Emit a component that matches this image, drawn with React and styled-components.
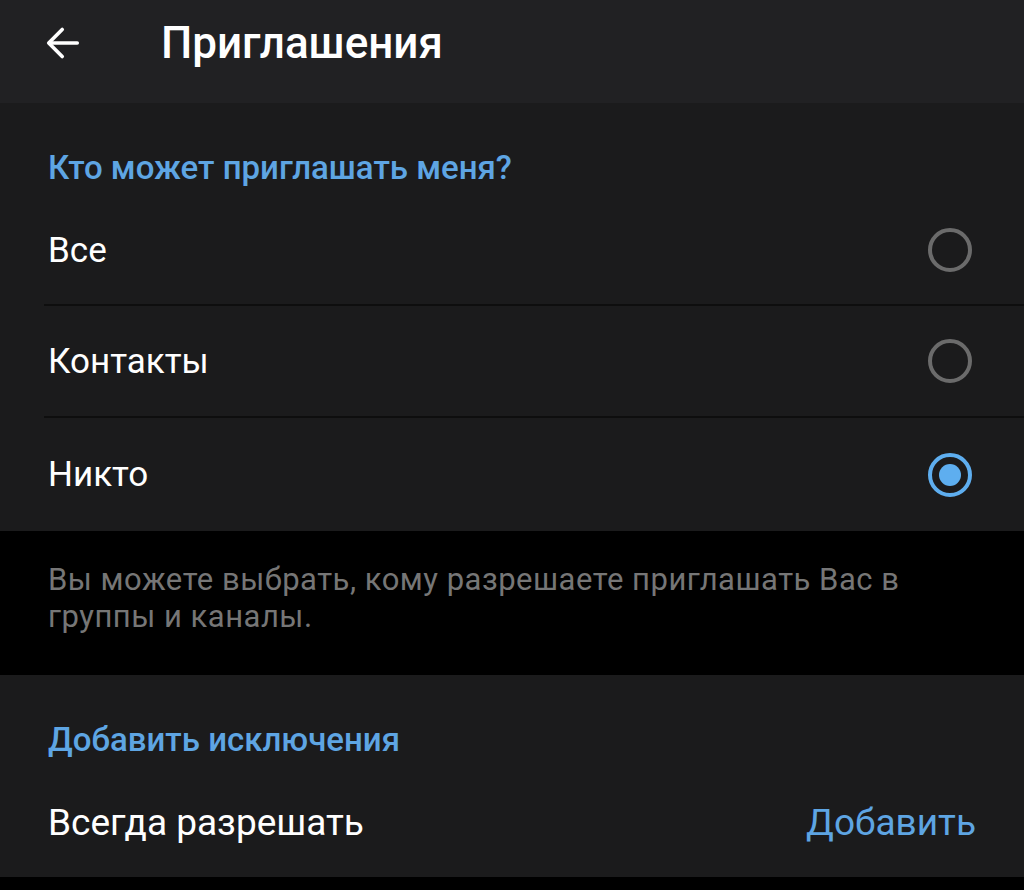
import styled, { createGlobalStyle } from "styled-components";

const GlobalStyle = createGlobalStyle`
  html, body {
    margin: 0;
    padding: 0;
    background: #000;
  }
  body {
    font-family: Roboto, "Noto Sans", sans-serif;
    -webkit-font-smoothing: antialiased;
  }
`;

const Page = styled.div`
  width: 1024px;
  height: 890px;
  background: #000;
  overflow: hidden;
  display: flex;
  flex-direction: column;
`;

const TopBar = styled.header`
  height: 103px;
  background: #212123;
  display: flex;
  align-items: center;
  padding: 0 0 17px 43px;
  gap: 78px;
  box-sizing: border-box;
`;

const BackButton = styled.button`
  background: none;
  border: none;
  padding: 0;
  width: 40px;
  height: 40px;
  display: flex;
  align-items: center;
  justify-content: center;
  color: #fff;
  cursor: pointer;
`;

const Title = styled.h1`
  margin: 0;
  font-size: 44px;
  font-weight: 500;
  color: #fff;
  line-height: 50px;
`;

const Section = styled.section`
  background: #1b1b1c;
`;

const SectionTitle = styled.h2`
  margin: 0;
  padding: 45px 48px 8px;
  font-size: 33px;
  font-weight: 500;
  color: #5ea5e3;
  line-height: 40px;
`;

const Row = styled.div`
  height: ${(p) => p.$h || 112}px;
  margin-left: 44px;
  padding: 0 ${(p) => p.$pr || 52}px 0 4px;
  display: flex;
  align-items: center;
  justify-content: space-between;
  border-bottom: ${(p) => (p.$last ? "none" : "2px solid #0e0e0e")};
  box-sizing: border-box;
`;

const Label = styled.span`
  font-size: ${(p) => p.$size || 35}px;
  color: #fff;
`;

const Radio = styled.span`
  width: 44px;
  height: 44px;
  border-radius: 50%;
  box-sizing: border-box;
  border: 4px solid ${(p) => (p.$checked ? "#5eaeef" : "#6b6b6b")};
  display: flex;
  align-items: center;
  justify-content: center;

  &::after {
    content: "";
    display: ${(p) => (p.$checked ? "block" : "none")};
    width: 22px;
    height: 22px;
    border-radius: 50%;
    background: #5eaeef;
  }
`;

const Hint = styled.p`
  margin: 0;
  height: 144px;
  box-sizing: border-box;
  background: #000;
  padding: 30px 80px 0 48px;
  font-size: 31px;
  line-height: 37px;
  color: #767676;
  letter-spacing: 0.5px;
`;

const LinkButton = styled.button`
  background: none;
  border: none;
  padding: 0;
  font-family: inherit;
  font-size: 37px;
  color: #5ea5e3;
  cursor: pointer;
`;

const options = [
  { label: "Все", checked: false, h: 110 },
  { label: "Контакты", checked: false, h: 112 },
  { label: "Никто", checked: true, h: 113 },
];

export default function App() {
  return (
    <Page>
      <GlobalStyle />
      <TopBar>
        <BackButton aria-label="Назад">
          <svg width="38" height="38" viewBox="0 0 24 24" fill="none" stroke="currentColor" strokeWidth="2.3" strokeLinecap="round" strokeLinejoin="round">
            <path d="M21 12H3.5" />
            <path d="M11.5 3.5L3 12l8.5 8.5" />
          </svg>
        </BackButton>
        <Title>Приглашения</Title>
      </TopBar>

      <Section>
        <SectionTitle>Кто может приглашать меня?</SectionTitle>
        {options.map((o, i) => (
          <Row key={o.label} $h={o.h} $last={i === options.length - 1}>
            <Label>{o.label}</Label>
            <Radio $checked={o.checked} />
          </Row>
        ))}
      </Section>

      <Hint>Вы можете выбрать, кому разрешаете приглашать Вас в группы и каналы.</Hint>

      <Section>
        <SectionTitle>Добавить исключения</SectionTitle>
        <Row $h={109} $last $pr={48}>
          <Label $size={37}>Всегда разрешать</Label>
          <LinkButton>Добавить</LinkButton>
        </Row>
      </Section>
    </Page>
  );
}
